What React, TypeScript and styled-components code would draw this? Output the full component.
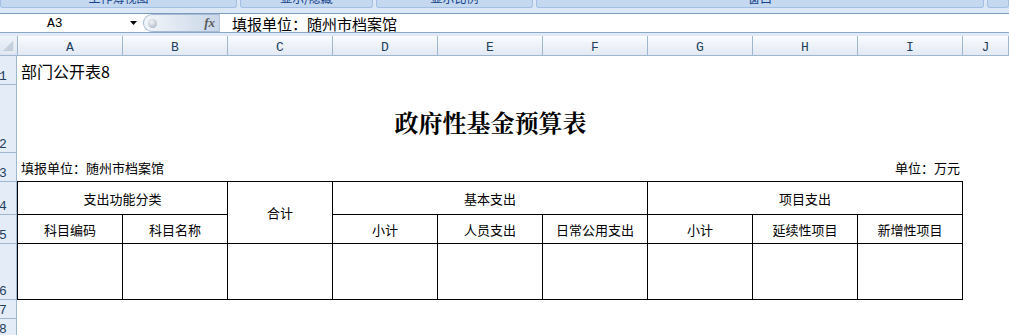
import React from 'react'
import styled, {createGlobalStyle} from 'styled-components'

const CJK = `'Noto Sans CJK SC', 'Noto Sans', sans-serif`
const MONO = `'Liberation Mono', 'DejaVu Sans Mono', monospace`
const GRID_LINE = '#9eb6ce'

const GlobalStyle = createGlobalStyle`
  html, body {
    margin: 0;
    padding: 0;
    background: #fff;
  }
  body {
    font-family: ${CJK};
  }
`

const Window = styled.div`
  width: 1009px;
  height: 335px;
  overflow: hidden;
  background: #fff;
  display: flex;
  flex-direction: column;
`

// ribbon group labels, only their bottom sliver is in view
const GroupBar = styled.div`
  height: 13px;
  flex-shrink: 0;
  display: flex;
  gap: 3px;
  background: #dbe7f5;
`

const Group = styled.div<{$w?: number}>`
  box-sizing: border-box;
  height: 8px;
  ${p => (p.$w ? `width: ${p.$w}px;` : 'flex: 1;')}
  flex-shrink: 0;
  display: flex;
  align-items: flex-end;
  justify-content: center;
  overflow: hidden;
  background: #c4d8ef;
  border: 1px solid #a3c0e4;
  border-top: none;
  border-radius: 0 0 3px 3px;
`

const GroupLabel = styled.span`
  font-family: ${CJK};
  font-size: 12px;
  line-height: 14px;
  padding-bottom: 2px;
  color: #15428b;
  white-space: nowrap;
`

const FormulaBar = styled.div`
  height: 20px;
  box-sizing: border-box;
  flex-shrink: 0;
  display: flex;
  align-items: stretch;
  background: #fff;
  border-top: 1px solid #7d9abf;
  border-bottom: 1px solid #8aa6c8;
`

const NameBox = styled.div`
  width: 140px;
  box-sizing: border-box;
  display: flex;
  align-items: center;
  padding: 0 3px 0 47px;
  font-family: ${MONO};
  font-size: 13px;
  color: #000;
`

const NameText = styled.span`
  flex: 1;
`

const FxButton = styled.div`
  width: 76px;
  margin-left: 3px;
  box-sizing: border-box;
  display: flex;
  align-items: center;
  justify-content: space-between;
  padding: 0 4px 0 4px;
  border: 1px solid #a7bbd4;
  border-right: none;
  border-radius: 9px 0 0 9px;
  background: linear-gradient(to right, #f3f6fa 0%, #dfe7f1 45%, #c9d7e8 100%);
`

const Knob = styled.span`
  width: 9px;
  height: 9px;
  border-radius: 50%;
  background: radial-gradient(circle at 40% 35%, #f4f6f9 0%, #c3ccd7 55%, #97a3b3 100%);
`

const Fx = styled.span`
  font-family: 'Liberation Serif', serif;
  font-style: italic;
  font-weight: bold;
  font-size: 13px;
  color: #5b5b5b;
`

const FormulaInput = styled.div`
  flex: 1;
  display: flex;
  align-items: center;
  padding-left: 12px;
  border-left: 1px solid #b3c5dc;
  font-family: ${CJK};
  font-size: 15px;
  color: #000;
`

const Spacer = styled.div`
  height: 3px;
  flex-shrink: 0;
  background: #e0e9f5;
`

const ColumnHeader = styled.div`
  display: grid;
  grid-template-columns: 18px repeat(9, 105px) 1fr;
  height: 20px;
  flex-shrink: 0;
`

const HeadCell = styled.div`
  box-sizing: border-box;
  display: flex;
  align-items: center;
  justify-content: center;
  padding-top: 3px;
  border-right: 1px solid ${GRID_LINE};
  border-bottom: 1px solid ${GRID_LINE};
  background: linear-gradient(#fafcfe, #e2e9f3);
  font-family: ${MONO};
  font-size: 13px;
  color: #22405e;
  overflow: hidden;
`

const Corner = styled(HeadCell)`
  padding: 0;
  background: linear-gradient(#eef3f9, #dbe4f0);
`

const SheetBody = styled.div`
  flex: 1;
  display: flex;
  min-height: 0;
`

const RowHeads = styled.div`
  width: 17px;
  flex-shrink: 0;
  display: flex;
  flex-direction: column;
`

const RowHead = styled.div<{$h: number}>`
  box-sizing: border-box;
  height: ${p => p.$h}px;
  flex-shrink: 0;
  display: flex;
  align-items: flex-end;
  padding-bottom: 1px;
  text-indent: -1px;
  overflow: hidden;
  background: #e4ecf7;
  border-right: 1px solid ${GRID_LINE};
  border-bottom: 1px solid ${GRID_LINE};
  font-family: ${MONO};
  font-size: 13px;
  line-height: 13px;
  color: #22405e;
`

const Content = styled.div`
  display: flex;
  flex-direction: column;
  width: 946px;
`

const Line = styled.div<{$h: number}>`
  height: ${p => p.$h}px;
  display: flex;
  align-items: center;
  padding: 0 3px 0 4px;
  font-family: ${CJK};
  font-size: 13px;
  color: #000;
`

const Caption = styled.span`
  font-size: 16px;
`

const Title = styled(Line)`
  justify-content: center;
  padding-top: 5px;
  box-sizing: border-box;
  font-family: 'Noto Serif CJK SC', ${CJK};
  font-size: 24px;
  font-weight: bold;
`

const Info = styled(Line)`
  justify-content: space-between;
`

const Table = styled.div`
  display: grid;
  grid-template-columns: repeat(9, 105px);
  grid-template-rows: 33px 29px 56px;
  border-top: 1px solid #000;
  border-left: 1px solid #000;
  width: 946px;
  box-sizing: border-box;
`

const Cell = styled.div<{$cols?: number; $rows?: number}>`
  box-sizing: border-box;
  grid-column: span ${p => p.$cols ?? 1};
  grid-row: span ${p => p.$rows ?? 1};
  display: flex;
  align-items: center;
  justify-content: center;
  border-right: 1px solid #000;
  border-bottom: 1px solid #000;
  font-family: ${CJK};
  font-size: 13px;
  color: #000;
  white-space: nowrap;
`

const groups = [
  {w: 237, label: '工作簿视图'},
  {w: 133, label: '显示/隐藏'},
  {w: 157, label: '显示比例'},
  {w: 448, label: '窗口'},
  {label: ''},
]

const columns = ['A', 'B', 'C', 'D', 'E', 'F', 'G', 'H', 'I', 'J']
const rowHeights = [29, 68, 29, 33, 29, 56, 19, 19]

const subHeads = ['科目编码', '科目名称', '小计', '人员支出', '日常公用支出', '小计', '延续性项目', '新增性项目']

export default function App() {
  return (
    <>
      <GlobalStyle />
      <Window>
        <GroupBar>
          {groups.map((g, i) => (
            <Group key={i} $w={g.w}>
              <GroupLabel>{g.label}</GroupLabel>
            </Group>
          ))}
        </GroupBar>

        <FormulaBar>
          <NameBox>
            <NameText>A3</NameText>
            <svg width="7" height="4" viewBox="0 0 7 4">
              <polygon points="0,0 7,0 3.5,4" fill="#000" />
            </svg>
          </NameBox>
          <FxButton>
            <Knob />
            <Fx>fx</Fx>
          </FxButton>
          <FormulaInput>填报单位：随州市档案馆</FormulaInput>
        </FormulaBar>

        <Spacer />

        <ColumnHeader>
          <Corner>
            <svg width="17" height="19" viewBox="0 0 17 19">
              <polygon points="14,4 14,16 2,16" fill="#c3cfdd" />
              <polyline points="14,4 14,16 2,16" fill="none" stroke="#f5f8fb" strokeWidth="1" />
            </svg>
          </Corner>
          {columns.map(c => (
            <HeadCell key={c}>{c}</HeadCell>
          ))}
        </ColumnHeader>

        <SheetBody>
          <RowHeads>
            {rowHeights.map((h, i) => (
              <RowHead key={i} $h={h}>
                {i + 1}
              </RowHead>
            ))}
          </RowHeads>

          <Content>
            <Line $h={29}>
              <Caption>部门公开表8</Caption>
            </Line>
            <Title $h={68}>政府性基金预算表</Title>
            <Info $h={28}>
              <span>填报单位：随州市档案馆</span>
              <span>单位：万元</span>
            </Info>

            <Table>
              <Cell $cols={2}>支出功能分类</Cell>
              <Cell $rows={2}>合计</Cell>
              <Cell $cols={3}>基本支出</Cell>
              <Cell $cols={3}>项目支出</Cell>
              {subHeads.map((s, i) => (
                <Cell key={i}>{s}</Cell>
              ))}
              {Array.from({length: 9}, (_, i) => (
                <Cell key={'e' + i} />
              ))}
            </Table>
          </Content>
        </SheetBody>
      </Window>
    </>
  )
}
